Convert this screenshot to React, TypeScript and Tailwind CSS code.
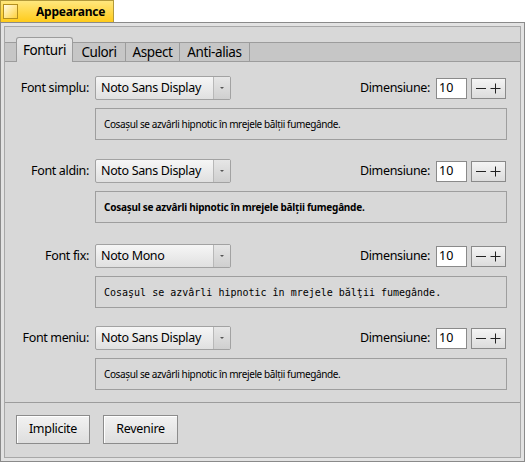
const FONT = { fontFamily: '"Noto Sans", "DejaVu Sans", sans-serif' };
const MONO = { fontFamily: '"DejaVu Sans Mono", "Liberation Mono", monospace' };

type Row = { label: string; font: string; kind: "plain" | "bold" | "mono" };

const ROWS: Row[] = [
  { label: "Font simplu:", font: "Noto Sans Display", kind: "plain" },
  { label: "Font aldin:", font: "Noto Sans Display", kind: "bold" },
  { label: "Font fix:", font: "Noto Mono", kind: "mono" },
  { label: "Font meniu:", font: "Noto Sans Display", kind: "plain" },
];

const SAMPLE = "Cosașul se azvârli hipnotic în mrejele bălții fumegânde.";
const SAMPLE_MONO = "Cosaşul se azvârli hipnotic în mrejele bălţii fumegânde.";

const TABS = [
  { t: "Fonturi", w: "w-[57px]" },
  { t: "Culori", w: "w-[53px]" },
  { t: "Aspect", w: "w-[54px]" },
  { t: "Anti-alias", w: "w-[70px]" },
];

const strip = "h-[20px] border-t border-b border-[#9c9c9c] bg-[#c6c6c6]";

function Dropdown({ value }: { value: string }) {
  return (
    <div className="flex h-[24px] w-[136px] rounded-[2px] border border-[#a2a2a2] bg-[linear-gradient(to_bottom,#f6f6f6,#e0e0e0)]">
      <div className="flex flex-1 items-center pl-[5px] text-[12.5px] tracking-[-0.35px] text-black">{value}</div>
      <div className="flex w-[17px] items-center justify-center border-l border-[#b8b8b8] bg-[linear-gradient(to_bottom,#e6e6e6,#cfcfcf)]">
        <div className="h-0 w-0 border-l-[2px] border-r-[2px] border-t-[2px] border-l-transparent border-r-transparent border-t-[#555]" />
      </div>
    </div>
  );
}

function SizeControls() {
  return (
    <div className="flex items-center">
      <span className="mr-[6px] text-[12.5px] tracking-[-0.35px] text-black">Dimensiune:</span>
      <div className="flex h-[21px] w-[31px] items-center border border-[#8a8a8a] bg-white pl-[2px] text-[12.5px] text-black">10</div>
      <div className="ml-[4px] flex h-[21px] w-[35px] items-center justify-center gap-[4px] border border-[#8a8a8a] bg-[linear-gradient(to_bottom,#f4f4f4,#dcdcdc)] text-[#222]">
        <svg width="10" height="11" viewBox="0 0 10 11">
          <path d="M0 5.5 H10" stroke="#222" strokeWidth="1" />
        </svg>
        <svg width="11" height="11" viewBox="0 0 11 11">
          <path d="M0.5 5.5 H10.5 M5.5 0.5 V10.5" stroke="#222" strokeWidth="1" />
        </svg>
      </div>
    </div>
  );
}

function Preview({ kind }: { kind: Row["kind"] }) {
  const base = "flex h-[32px] w-[412px] items-center border border-[#9e9e9e] pl-[8px] text-[10px] text-black";
  if (kind === "mono") {
    return (
      <div className={base} style={MONO}>
        {SAMPLE_MONO}
      </div>
    );
  }
  return (
    <div className={`${base} ${kind === "bold" ? "font-bold tracking-[-0.25px]" : "tracking-[-0.38px]"}`}>{SAMPLE}</div>
  );
}

function FontRow({ row, top }: { row: Row; top: string }) {
  return (
    <div className={top}>
      <div className="flex items-center">
        <div className="w-[85px] pr-[1px] text-right text-[12.5px] tracking-[-0.35px] text-black">{row.label}</div>
        <div className="ml-[5px]">
          <Dropdown value={row.font} />
        </div>
        <div className="ml-auto mr-[14px]">
          <SizeControls />
        </div>
      </div>
      <div className="ml-[90px] mt-[8px]">
        <Preview kind={row.kind} />
      </div>
    </div>
  );
}

function Button({ children, w }: { children: string; w: string }) {
  return (
    <div className={`${w} flex h-[29px] items-center justify-center border border-[#8c8c8c] bg-[linear-gradient(to_bottom,#f2f2f2,#dedede)] text-[12.5px] tracking-[-0.3px] text-black shadow-[inset_1px_1px_0_#ffffff]`}>
      {children}
    </div>
  );
}

export default function App() {
  return (
    <div className="h-[462px] w-[525px] bg-white" style={FONT}>
      {/* yellow window tab */}
      <div className="flex h-[22px] w-[114px] items-center border border-b-0 border-[#b39a3a] bg-[linear-gradient(to_bottom,#ffe77d,#ffcb1a)]">
        <div className="ml-[2px] h-[15px] w-[15px] border border-[#b38f1e] bg-[linear-gradient(135deg,#fffbe6,#ffd23a)]" />
        <span className="ml-[18px] text-[12px] font-bold tracking-[-0.2px] text-black">Appearance</span>
      </div>
      {/* window frame */}
      <div className="h-[440px] border border-[#8a8a8a] bg-[#e2e2e2] p-[3px]">
        <div className="flex h-full flex-col border border-[#a8a8a8] bg-[#d8d8d8]">
          {/* tab bar */}
          <div className="flex h-[35px] items-end">
            <div className={`${strip} w-[11px]`} />
            {TABS.map((tab, i) =>
              i === 0 ? (
                <div
                  key={tab.t}
                  className={`${tab.w} flex h-[25px] items-center justify-center rounded-t-[3px] border border-b-0 border-[#9c9c9c] bg-[linear-gradient(to_bottom,#e6e6e6,#d8d8d8)] pt-[1px] text-[13.5px] tracking-[-0.4px] text-black`}
                >
                  {tab.t}
                </div>
              ) : (
                <div
                  key={tab.t}
                  className={`${strip} ${tab.w} flex items-center justify-center border-r text-[13.5px] tracking-[-0.4px] text-black`}
                >
                  {tab.t}
                </div>
              )
            )}
            <div className={`${strip} flex-1`} />
          </div>
          {/* tab content */}
          <div className="h-[341px] border-b border-[#9c9c9c]">
            <FontRow row={ROWS[0]} top="mt-[14px]" />
            <FontRow row={ROWS[1]} top="mt-[19px]" />
            <FontRow row={ROWS[2]} top="mt-[21px]" />
            <FontRow row={ROWS[3]} top="mt-[18px]" />
          </div>
          {/* buttons */}
          <div className="flex gap-[13px] pl-[11px] pt-[12px]">
            <Button w="w-[74px]">Implicite</Button>
            <Button w="w-[75px]">Revenire</Button>
          </div>
        </div>
      </div>
    </div>
  );
}
